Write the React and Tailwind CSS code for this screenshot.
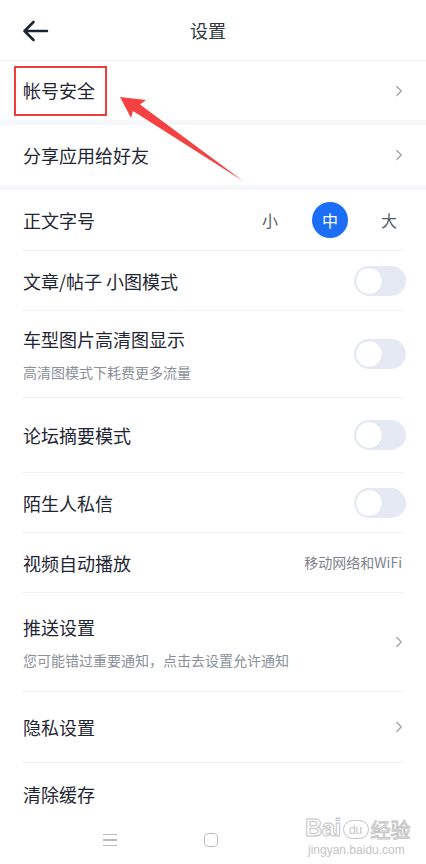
import { ChevronRight } from "lucide-react";

// simple settings screen, phone size
const font = { fontFamily: '"Noto Sans CJK SC", "Noto Sans", sans-serif' };

function Toggle() {
  return (
    <div className="w-[52px] h-[30px] rounded-full bg-[#e4e9f3] flex items-center px-[1px]">
      <div className="w-[28px] h-[28px] rounded-full bg-white border border-[#dfe4ee]" />
    </div>
  );
}

function Chevron() {
  return <ChevronRight size={18} strokeWidth={1.6} className="text-[#9aa0a8] -mr-[2px]" />;
}

function Divider() {
  return <div className="mx-[22px] h-px bg-[#f0f2f6]" />;
}

function Row({ title, sub, right, h = "h-[60px]" }) {
  return (
    <div className={`${h} flex items-center justify-between pl-[23px] pr-[20px]`}>
      <div className="flex flex-col">
        <span className="text-[18px] leading-[24px] text-[#1f2633]">{title}</span>
        {sub && <span className="text-[14px] leading-[18px] text-[#8a9099] mt-[12px]">{sub}</span>}
      </div>
      {right}
    </div>
  );
}

function Gap() {
  return <div className="h-[5px] bg-[#f5f7fa]" />;
}

export default function App() {
  return (
    <div className="relative w-[426px] h-[864px] overflow-hidden bg-white" style={font}>
      {/* header */}
      <div className="h-[61px] relative flex items-center justify-center pr-[10px] border-b border-[#eceef2]">
        <svg className="absolute left-[22px] top-[20px]" width="27" height="22" viewBox="0 0 27 22" fill="none">
          <path d="M25 11H3M11.5 2L2.5 11l9 9" stroke="#1c2433" strokeWidth="2.6" strokeLinecap="round" strokeLinejoin="round" />
        </svg>
        <span className="text-[18px] text-[#333840]">设置</span>
      </div>

      <div className="h-[59px] flex items-center justify-between pl-[23px] pr-[20px]">
        <span className="text-[18px] text-[#1f2633]">帐号安全</span>
        <Chevron />
      </div>
      <Gap />
      <Row title="分享应用给好友" right={<Chevron />} />
      <Gap />

      <div className="h-[60px] flex items-center justify-between pl-[23px] pr-[25px]">
        <span className="text-[18px] text-[#1f2633]">正文字号</span>
        <div className="flex items-center text-[16px] text-[#555b64]">
          <span className="w-[24px] text-center">小</span>
          <span className="ml-[30px] w-[36px] h-[36px] rounded-full bg-[#1b6ef5] text-white flex items-center justify-center">中</span>
          <span className="ml-[29px] w-[24px] text-center">大</span>
        </div>
      </div>
      <Divider />
      <Row title="文章/帖子 小图模式" right={<Toggle />} h="h-[59px]" />
      <Divider />
      <Row title="车型图片高清图显示" sub="高清图模式下耗费更多流量" right={<Toggle />} h="h-[86px]" />
      <Divider />
      <Row title="论坛摘要模式" right={<Toggle />} h="h-[74px]" />
      <Divider />
      <Row title="陌生人私信" right={<Toggle />} h="h-[59px]" />
      <Divider />
      <Row
        title="视频自动播放"
        right={<span className="text-[14px] text-[#7d838c] mr-[4px]">移动网络和WiFi</span>}
        h="h-[59px]"
      />
      <Divider />
      <Row
        title="推送设置"
        sub="您可能错过重要通知，点击去设置允许通知"
        right={<Chevron />}
        h="h-[98px]"
      />
      <Divider />
      <Row title="隐私设置" right={<Chevron />} h="h-[70px]" />
      <Divider />
      <Row title="清除缓存" h="h-[62px]" />

      {/* system nav bar */}
      <div className="h-[30px] flex items-center">
        <div className="ml-[103px] flex flex-col gap-[4px]">
          <div className="w-[14px] h-[1.5px] bg-[#b8bcc2]" />
          <div className="w-[14px] h-[1.5px] bg-[#b8bcc2]" />
          <div className="w-[14px] h-[1.5px] bg-[#b8bcc2]" />
        </div>
        <div className="ml-[87px] w-[14px] h-[14px] rounded-[4px] border-[1.5px] border-[#b8bcc2]" />
      </div>

      {/* baidu watermark */}
      <div className="absolute left-[305px] top-[816px] flex flex-col items-start" style={{ fontFamily: '"Liberation Sans", sans-serif' }}>
        <div className="flex items-end leading-none">
          <span className="text-[24px] font-bold tracking-tight" style={{ WebkitTextStroke: "1px #c4c4c4", color: "white" }}>Bai</span>
          <span className="ml-[2px] mb-[1px] w-[26px] h-[19px] rounded-full border border-[#c4c4c4] text-[12px] text-[#c4c4c4] flex items-center justify-center">du</span>
          <span className="ml-[2px] text-[20px]" style={{ ...font, WebkitTextStroke: "1px #c4c4c4", color: "white" }}>经验</span>
        </div>
        <span className="text-[12px] mt-[1px] ml-[3px] text-[#c4c4c4]">jingyan.baidu.com</span>
      </div>

      {/* annotation: red box + arrow */}
      <div className="absolute left-[14px] top-[66px] w-[93px] h-[50px] border-[2.5px] border-[#f23b3b]" />
      <svg className="absolute left-0 top-0" width="426" height="200" viewBox="0 0 426 200">
        <polygon points="120,97 146,100 140,104.5 243,181 133,111 131,118" fill="#f44141" />
      </svg>
    </div>
  );
}
